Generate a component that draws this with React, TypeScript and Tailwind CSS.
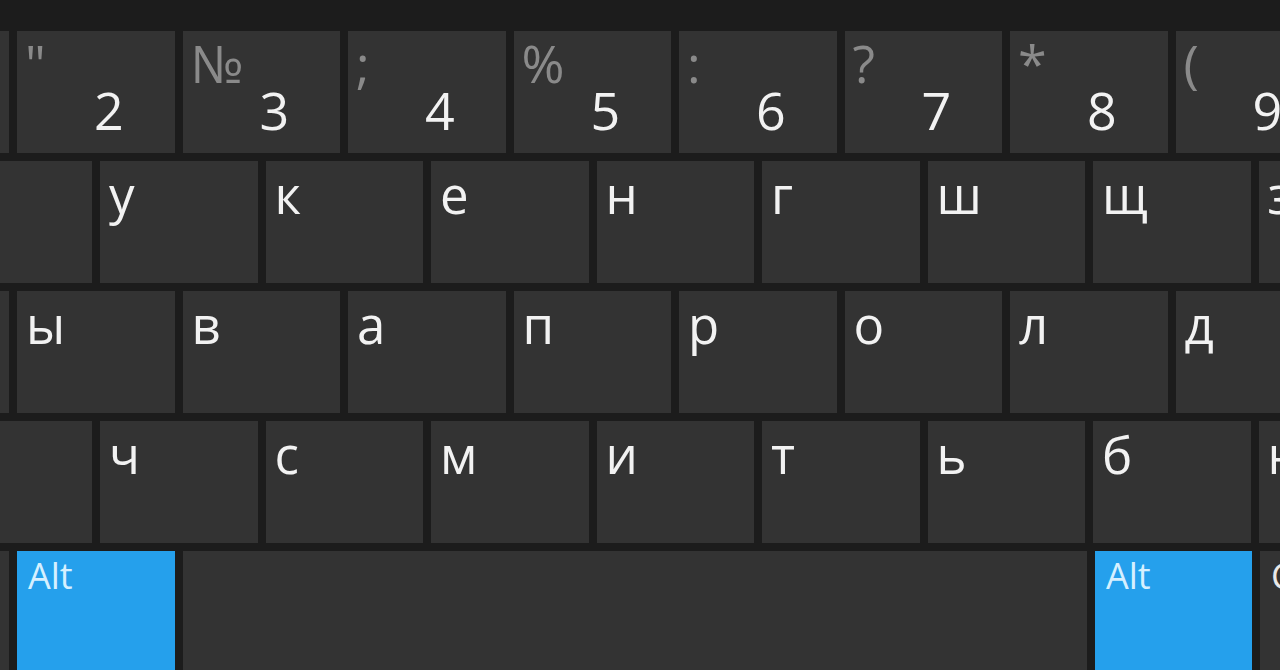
import React from 'react';

type K = { shift?: string; main: string; digit?: boolean };

const row1: K[] = [
  { shift: '!', main: '1', digit: true },
  { shift: '"', main: '2', digit: true },
  { shift: '№', main: '3', digit: true },
  { shift: ';', main: '4', digit: true },
  { shift: '%', main: '5', digit: true },
  { shift: ':', main: '6', digit: true },
  { shift: '?', main: '7', digit: true },
  { shift: '*', main: '8', digit: true },
  { shift: '(', main: '9', digit: true },
];
const row2 = ['ц', 'у', 'к', 'е', 'н', 'г', 'ш', 'щ', 'з'];
const row3 = ['ф', 'ы', 'в', 'а', 'п', 'р', 'о', 'л', 'д'];
const row4 = ['я', 'ч', 'с', 'м', 'и', 'т', 'ь', 'б', 'ю'];

function DigitKey({ k }: { k: K }) {
  return (
    <div className="w-[157.5px] h-[122px] shrink-0 bg-[#333333] flex flex-col">
      <div className="pt-[8px] pl-[8px] h-[55px] text-[52px] leading-[48px] text-[#8a8a8a]">{k.shift}</div>
      <div className="pl-[77px] text-[52px] leading-[48px] text-[#f2f2f2]">{k.main}</div>
    </div>
  );
}

function LetterKey({ ch }: { ch: string }) {
  return (
    <div className="w-[157.5px] h-[122px] shrink-0 bg-[#333333] pt-[9px] pl-[9px] text-[51px] leading-[48px] text-[#f2f2f2]">
      {ch}
    </div>
  );
}

export default function App() {
  return (
    <div
      className="w-[1280px] h-[670px] overflow-hidden bg-[#1c1c1c] flex flex-col gap-[8px] pt-[31px]"
      style={{ fontFamily: '"Open Sans", "Noto Sans", sans-serif' }}
    >
      <div className="flex gap-[8px] ml-[-148.5px] shrink-0">
        {row1.map((k, i) => (
          <DigitKey key={i} k={k} />
        ))}
      </div>
      <div className="flex gap-[8px] ml-[-65.5px] shrink-0">
        {row2.map((c, i) => (
          <LetterKey key={i} ch={c} />
        ))}
      </div>
      <div className="flex gap-[8px] ml-[-148.5px] shrink-0">
        {row3.map((c, i) => (
          <LetterKey key={i} ch={c} />
        ))}
      </div>
      <div className="flex gap-[8px] ml-[-65.5px] shrink-0">
        {row4.map((c, i) => (
          <LetterKey key={i} ch={c} />
        ))}
      </div>
      <div className="flex gap-[8px] ml-[-148.5px] shrink-0 h-[122px]">
        <div className="w-[157.5px] h-[122px] shrink-0 bg-[#333333]" />
        <div className="w-[158px] h-[122px] shrink-0 bg-[#25a0ec] pt-[7px] pl-[11px] text-[36px] leading-none text-[#d6f0ff]">
          Alt
        </div>
        <div className="w-[904px] h-[122px] shrink-0 bg-[#333333]" />
        <div className="w-[157px] h-[122px] shrink-0 bg-[#25a0ec] pt-[7px] pl-[11px] text-[36px] leading-none text-[#d6f0ff]">
          Alt
        </div>
        <div className="w-[157.5px] h-[122px] shrink-0 bg-[#333333] pt-[7px] pl-[11px] text-[36px] leading-none text-[#e8e8e8]">
          Ctrl
        </div>
      </div>
    </div>
  );
}
